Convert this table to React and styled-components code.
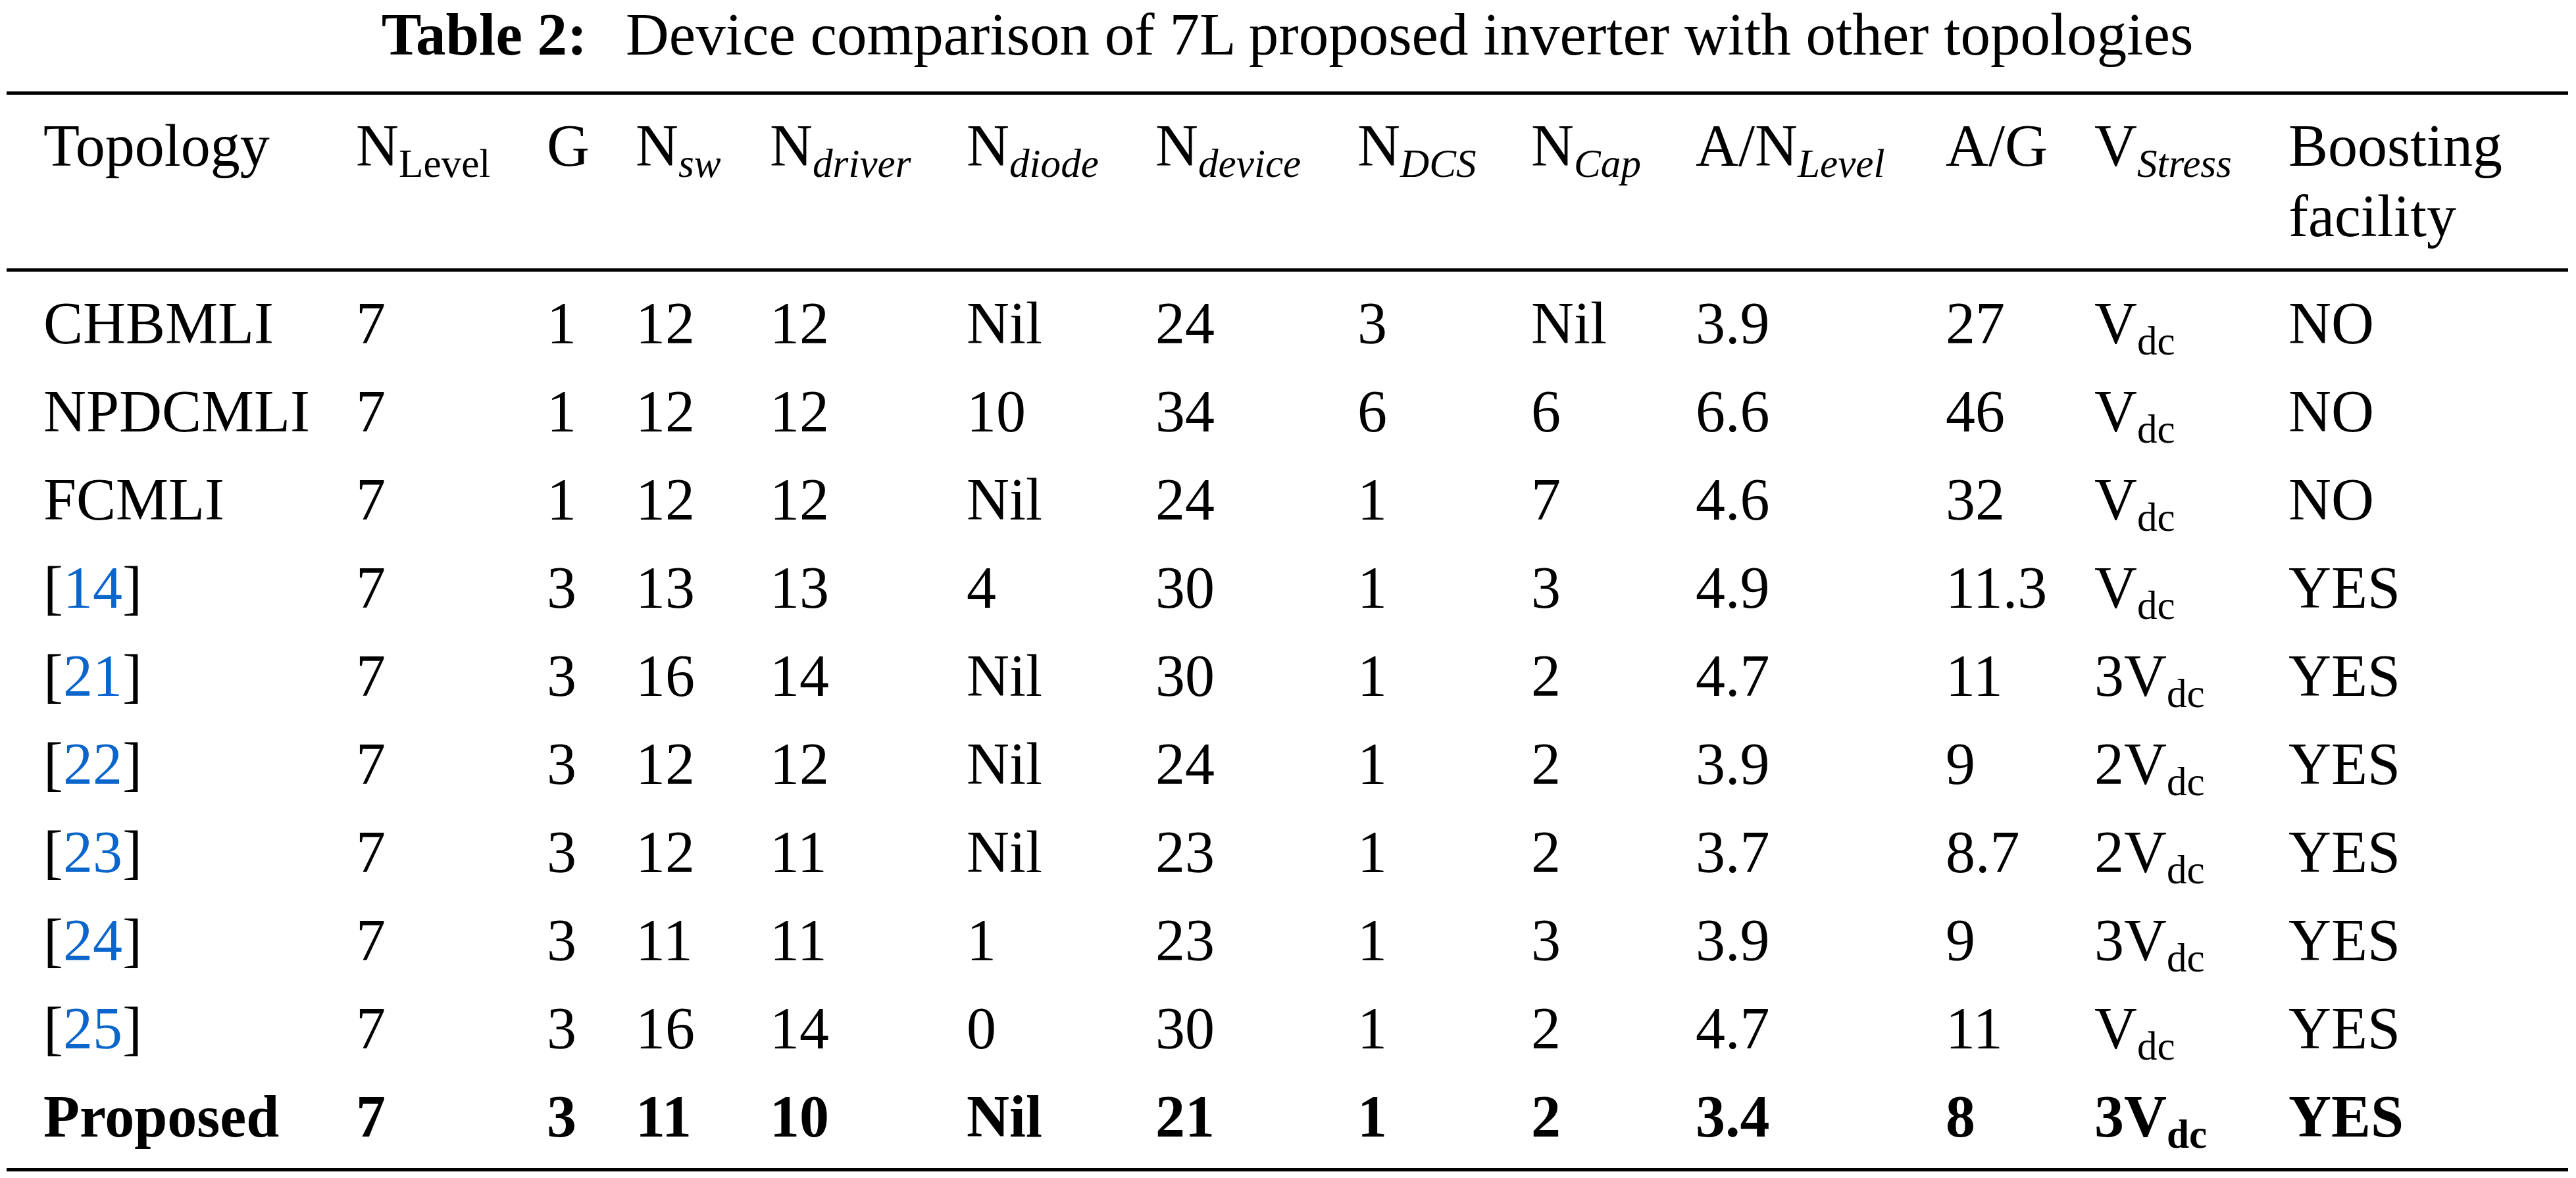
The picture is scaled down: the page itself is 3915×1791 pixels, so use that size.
import React from 'react';
import styled, { createGlobalStyle } from 'styled-components';

const GlobalStyle = createGlobalStyle`
  html, body {
    margin: 0;
    padding: 0;
    background: #ffffff;
  }
  body {
    font-family: "Liberation Serif", "Times New Roman", serif;
    color: #000000;
  }
`;

const Page = styled.div`
  width: 3893px;
  padding: 3px 12px 0 10px;
  font-family: "Liberation Serif", "Times New Roman", serif;
  font-size: 90px;
`;

const Caption = styled.div`
  text-align: center;
  font-size: 91px;
  line-height: 100px;
  margin-bottom: 36px;
  white-space: nowrap;
`;

const CaptionLabel = styled.b`
  margin-right: 36px;
`;

const Table = styled.table`
  width: 100%;
  table-layout: fixed;
  border-collapse: separate;
  border-spacing: 0;
  font-family: "Liberation Serif", "Times New Roman", serif;
  font-size: 90px;
  color: #000000;
`;

const HeadCell = styled.th`
  font-weight: normal;
  text-align: left;
  vertical-align: top;
  padding: 24px 0 26px 0;
  line-height: 107px;
  border-top: 5px solid #000000;
  border-bottom: 5px solid #000000;

  &:first-child {
    padding-left: 56px;
  }
`;

const BodyRow = styled.tr`
  &:first-child td {
    padding-top: 12px;
  }
  &:last-child td {
    padding-bottom: 11px;
    border-bottom: 5px solid #000000;
  }
`;

const Cell = styled.td`
  padding: 0;
  line-height: 134px;
  white-space: nowrap;
  vertical-align: top;
  text-align: left;
  font-weight: ${(p) => (p.$bold ? 700 : 400)};

  &:first-child {
    padding-left: 56px;
  }
`;

const Sub = styled.sub`
  font-size: 0.68em;
  line-height: 0;
  vertical-align: -17px;
  font-style: ${(p) => (p.$italic ? 'italic' : 'normal')};
`;

const Ref = styled.a`
  color: #0b66cc;
  text-decoration: none;
`;

const widths = [531, 290, 135, 204, 299, 287, 307, 264, 250, 380, 226, 295, 425];

const headers = [
  'Topology',
  <>N<Sub>Level</Sub></>,
  'G',
  <>N<Sub $italic>sw</Sub></>,
  <>N<Sub $italic>driver</Sub></>,
  <>N<Sub $italic>diode</Sub></>,
  <>N<Sub $italic>device</Sub></>,
  <>N<Sub $italic>DCS</Sub></>,
  <>N<Sub $italic>Cap</Sub></>,
  <>A/N<Sub $italic>Level</Sub></>,
  'A/G',
  <>V<Sub $italic>Stress</Sub></>,
  'Boosting facility',
];

const rows = [
  ['CHBMLI', '7', '1', '12', '12', 'Nil', '24', '3', 'Nil', '3.9', '27', 'Vdc', 'NO'],
  ['NPDCMLI', '7', '1', '12', '12', '10', '34', '6', '6', '6.6', '46', 'Vdc', 'NO'],
  ['FCMLI', '7', '1', '12', '12', 'Nil', '24', '1', '7', '4.6', '32', 'Vdc', 'NO'],
  [14, '7', '3', '13', '13', '4', '30', '1', '3', '4.9', '11.3', 'Vdc', 'YES'],
  [21, '7', '3', '16', '14', 'Nil', '30', '1', '2', '4.7', '11', '3Vdc', 'YES'],
  [22, '7', '3', '12', '12', 'Nil', '24', '1', '2', '3.9', '9', '2Vdc', 'YES'],
  [23, '7', '3', '12', '11', 'Nil', '23', '1', '2', '3.7', '8.7', '2Vdc', 'YES'],
  [24, '7', '3', '11', '11', '1', '23', '1', '3', '3.9', '9', '3Vdc', 'YES'],
  [25, '7', '3', '16', '14', '0', '30', '1', '2', '4.7', '11', 'Vdc', 'YES'],
  ['Proposed', '7', '3', '11', '10', 'Nil', '21', '1', '2', '3.4', '8', '3Vdc', 'YES'],
];

const renderValue = (value) => {
  if (typeof value === 'number') {
    return <>[<Ref href={`#ref-${value}`}>{value}</Ref>]</>;
  }
  const volt = value.match(/^(\d?)Vdc$/);
  if (volt) {
    return <>{volt[1]}V<Sub>dc</Sub></>;
  }
  return value;
};

export default function App() {
  return (
    <Page>
      <GlobalStyle />
      <Caption>
        <CaptionLabel>Table 2:</CaptionLabel> Device comparison of 7L proposed inverter with other topologies
      </Caption>
      <Table>
        <colgroup>
          {widths.map((w, i) => (
            <col key={i} style={{ width: w }} />
          ))}
        </colgroup>
        <thead>
          <tr>
            {headers.map((h, i) => (
              <HeadCell key={i}>{h}</HeadCell>
            ))}
          </tr>
        </thead>
        <tbody>
          {rows.map((row, r) => (
            <BodyRow key={r}>
              {row.map((value, c) => (
                <Cell key={c} $bold={r === rows.length - 1}>
                  {renderValue(value)}
                </Cell>
              ))}
            </BodyRow>
          ))}
        </tbody>
      </Table>
    </Page>
  );
}
